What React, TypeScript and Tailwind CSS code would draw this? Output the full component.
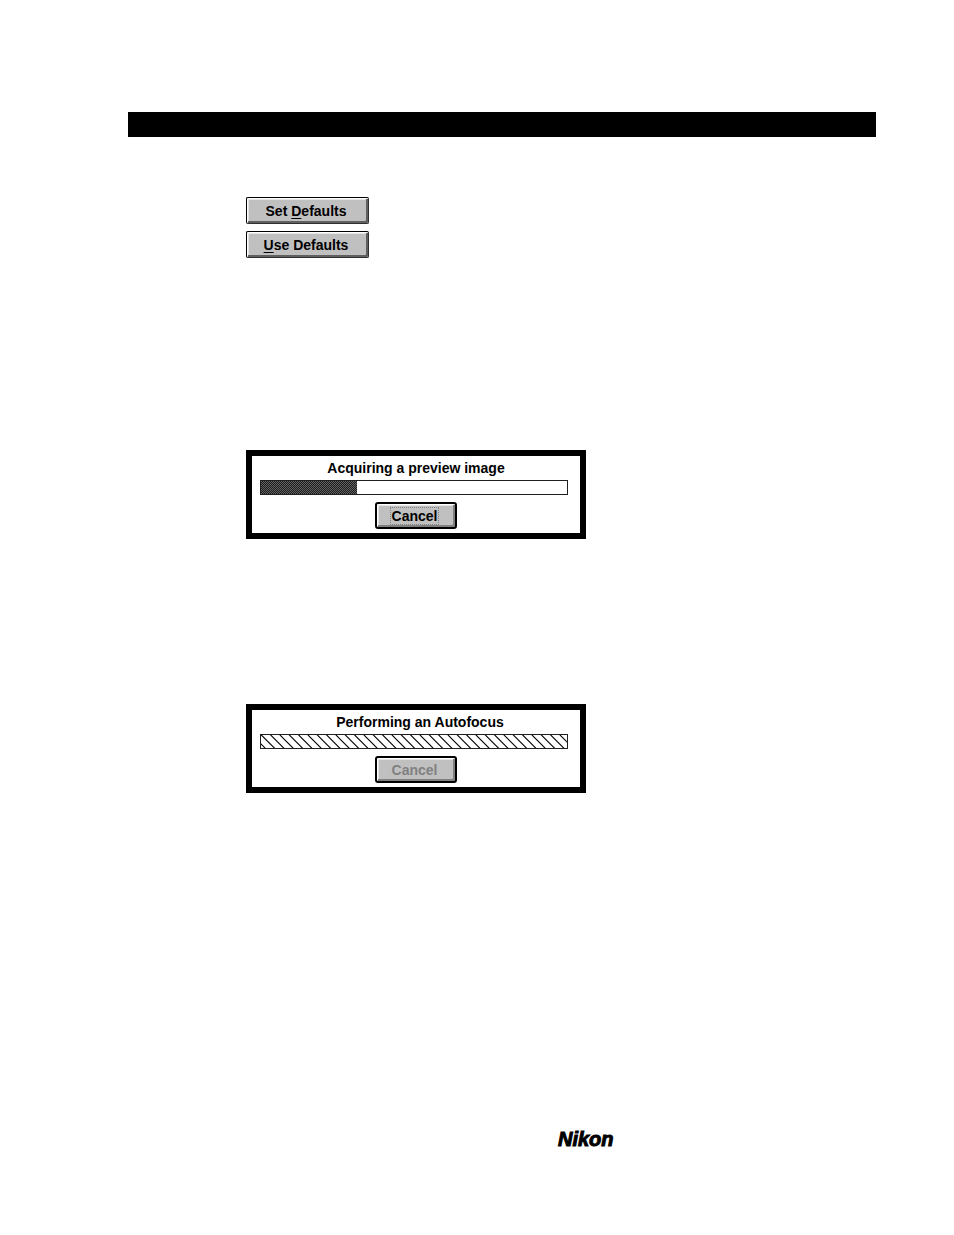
import type { ReactNode } from "react";

function DefaultsButton({ children }: { children: ReactNode }) {
  return (
    <button
      type="button"
      className="h-[27px] w-[123px] rounded-[2px] border border-black border-r-[#303030] border-b-[#303030] bg-[#c0c0c0] pr-[3px] text-sm leading-4 font-bold text-black shadow-[inset_1px_1px_0_#ffffff,inset_-2px_-2px_0_#606060,inset_2px_2px_0_#e4e4e4]"
    >
      {children}
    </button>
  );
}

function DitherFill() {
  return (
    <svg className="block h-full w-full" aria-hidden="true" shapeRendering="crispEdges">
      <defs>
        <pattern id="dither" width="2" height="2" patternUnits="userSpaceOnUse">
          <rect width="2" height="2" fill="#1c1c1c" />
          <rect width="1" height="1" fill="#626262" />
          <rect x="1" y="1" width="1" height="1" fill="#626262" />
        </pattern>
      </defs>
      <rect width="100%" height="100%" fill="url(#dither)" />
    </svg>
  );
}

function HatchFill() {
  const lines = Array.from({ length: 36 }, (_, i) => -9 + (i * 28) / 3);
  return (
    <svg className="block h-full w-full" aria-hidden="true">
      {lines.map((x) => (
        <line key={x} x1={x - 1} y1="-1" x2={x + 14} y2="14" stroke="#000000" strokeWidth="1.1" />
      ))}
    </svg>
  );
}

interface ProgressDialogProps {
  id: string;
  title: string;
  value?: number;
  disabled?: boolean;
}

function ProgressDialog({ id, title, value, disabled = false }: ProgressDialogProps) {
  return (
    <section
      aria-labelledby={id}
      className="flex w-[340px] flex-col items-center border-6 border-black bg-white pt-1 pb-1"
    >
      <h2 id={id} className={disabled ? "pl-2 text-sm leading-4 font-bold" : "text-sm leading-4 font-bold"}>
        {title}
      </h2>
      <div className="mt-1 w-full pr-3 pl-2">
        <div
          role="progressbar"
          aria-labelledby={id}
          aria-valuenow={value}
          className="h-[15px] border border-[#202020]"
        >
          {value === undefined ? (
            <HatchFill />
          ) : (
            <div className="h-full" style={{ width: `${value}%` }}>
              <DitherFill />
            </div>
          )}
        </div>
      </div>
      <button
        type="button"
        disabled={disabled}
        className="mt-[7px] flex h-[27px] w-[82px] items-center justify-center rounded-[3px] border-2 border-black bg-[#c0c0c0] pr-[3px] text-sm leading-4 font-bold text-black shadow-[inset_1px_1px_0_#ffffff,inset_-2px_-2px_0_#808080,inset_2px_2px_0_#e4e4e4] disabled:text-[#808080]"
      >
        <span className={disabled ? "px-px" : "outline-1 outline-dotted outline-[#808080] px-px"}>
          Cancel
        </span>
      </button>
    </section>
  );
}

export default function App() {
  return (
    <div className="flex min-h-screen flex-col bg-white pt-28 pr-[78px] pl-32 font-['Liberation_Sans',Arial,sans-serif] text-black">
      <header className="h-[25px] bg-black" />
      <main className="flex flex-col items-start pt-[60px] pl-[118px]">
        <div className="flex flex-col gap-[7px]">
          <DefaultsButton>
            Set <u className="underline-offset-2">D</u>efaults
          </DefaultsButton>
          <DefaultsButton>
            <u className="underline-offset-2">U</u>se Defaults
          </DefaultsButton>
        </div>
        <div className="mt-48 flex flex-col gap-[165px]">
          <ProgressDialog id="preview-title" title="Acquiring a preview image" value={31.5} />
          <ProgressDialog id="autofocus-title" title="Performing an Autofocus" disabled />
        </div>
      </main>
      <footer className="mt-[334px] pl-[430px] text-xl leading-6 font-bold italic [-webkit-text-stroke:1px_#000000]">
        Nikon
      </footer>
    </div>
  );
}
